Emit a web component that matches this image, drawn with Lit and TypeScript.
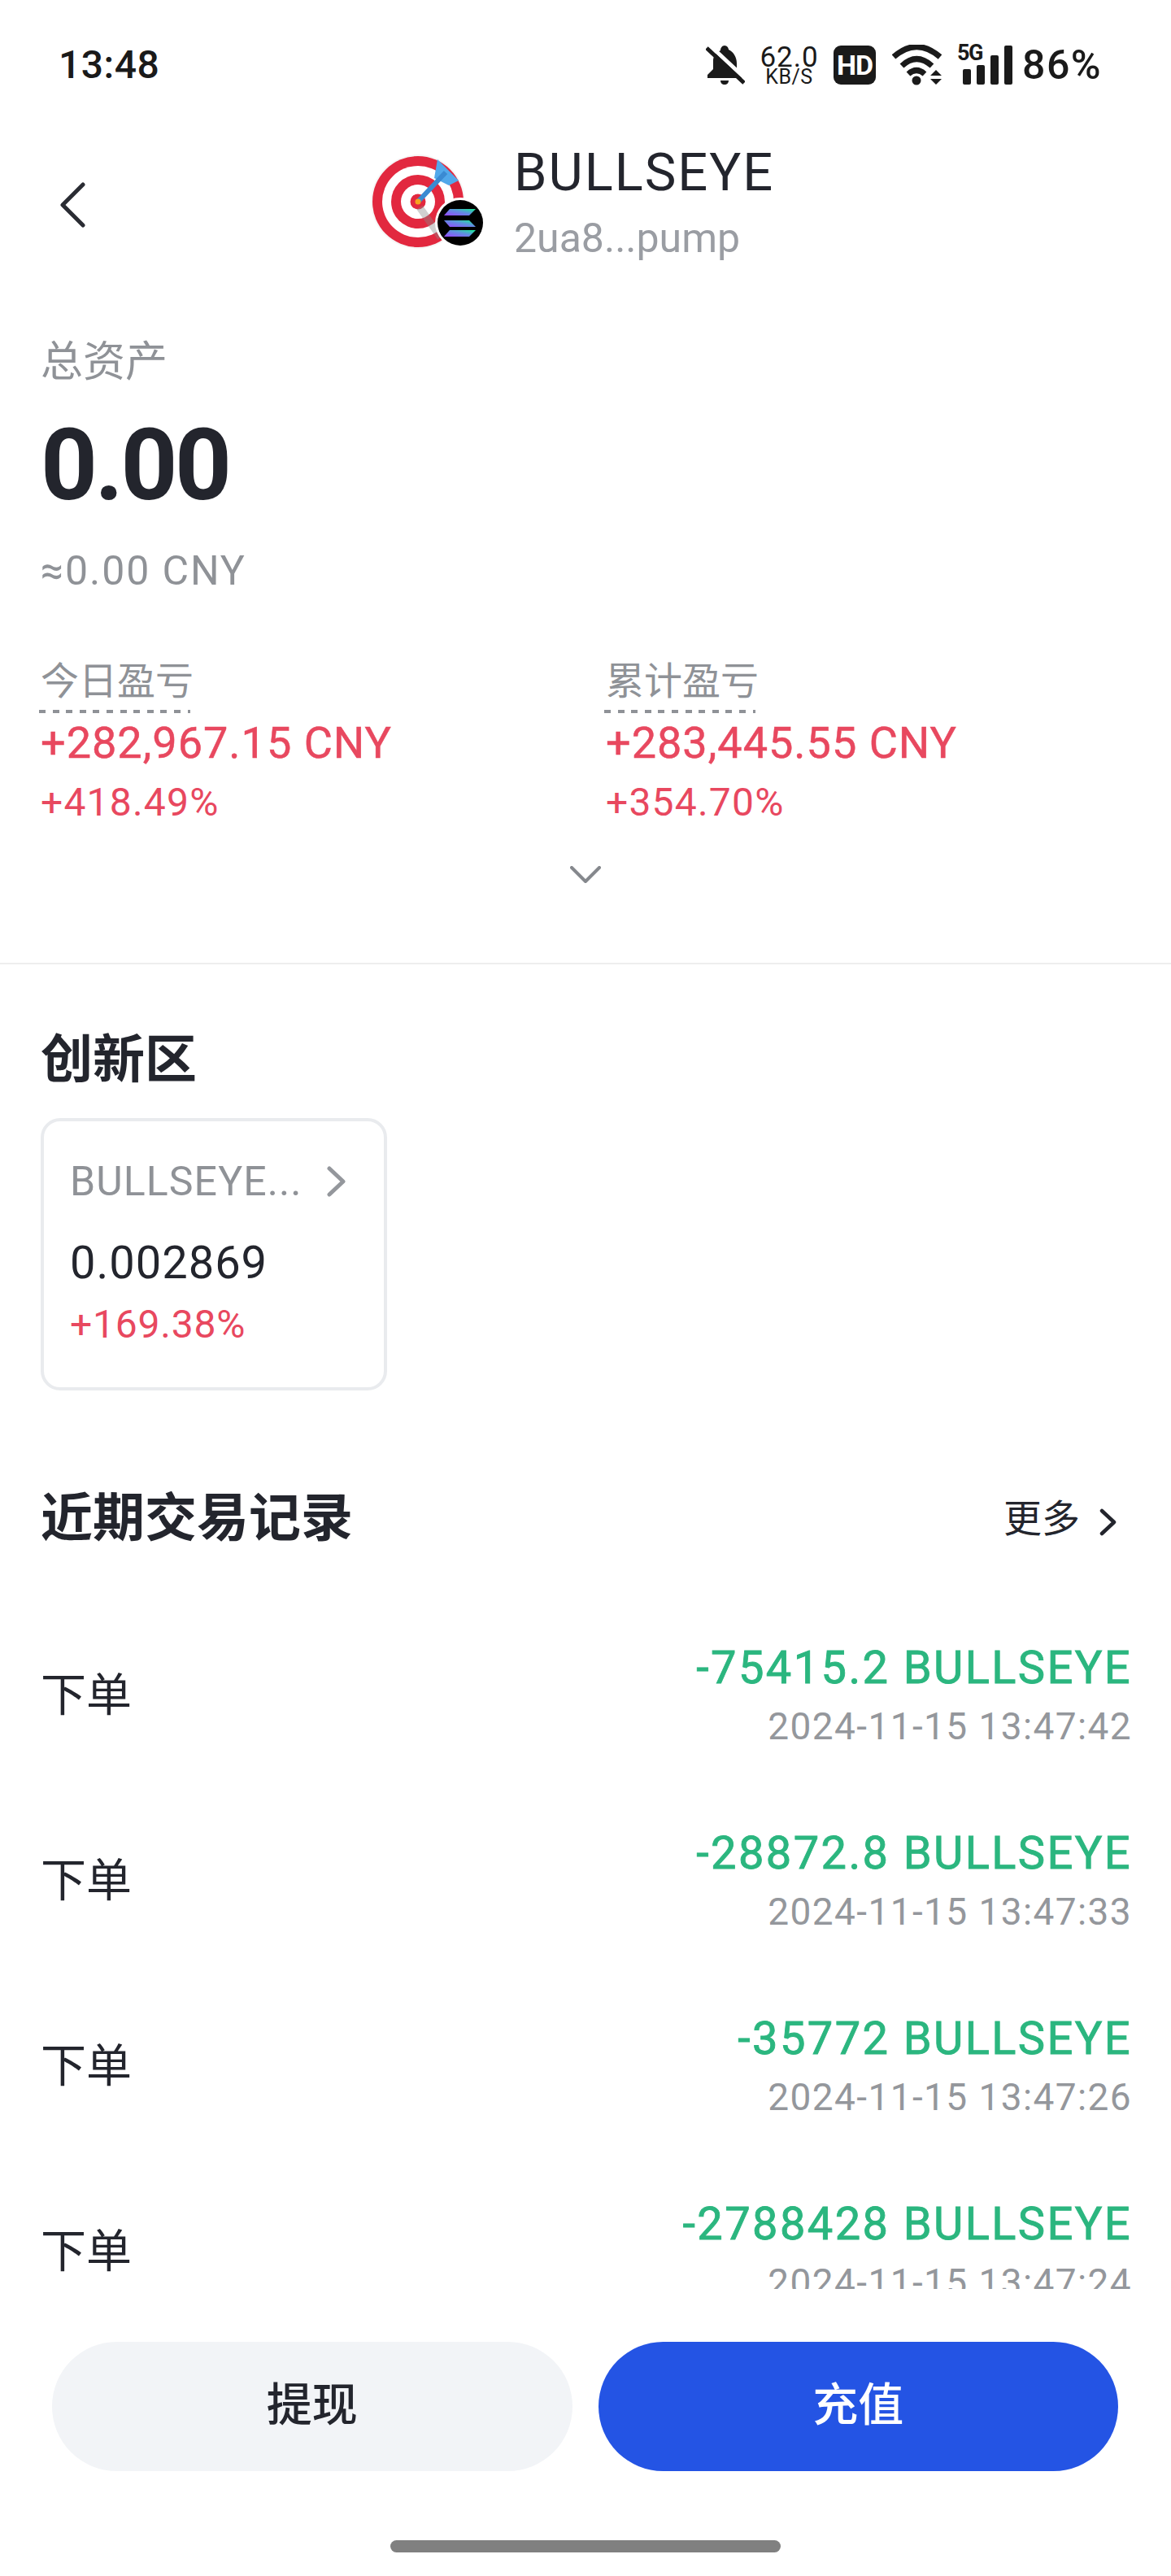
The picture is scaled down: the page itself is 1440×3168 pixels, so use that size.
import { LitElement, html, css, svg } from "lit";
import { customElement } from "lit/decorators.js";

const rows = [
  { amount: "-75415.2 BULLSEYE", time: "2024-11-15 13:47:42" },
  { amount: "-28872.8 BULLSEYE", time: "2024-11-15 13:47:33" },
  { amount: "-35772 BULLSEYE", time: "2024-11-15 13:47:26" },
  { amount: "-2788428 BULLSEYE", time: "2024-11-15 13:47:24" },
];

const chevron = (cls: string, d: string, w: number, h: number, vb: string) => html`
  <svg class=${cls} width=${w} height=${h} viewBox=${vb} fill="none" stroke="currentColor" stroke-linecap="round" stroke-linejoin="round">
    ${svg`<path d=${d}></path>`}
  </svg>`;

@customElement("app-root")
export class AppRoot extends LitElement {
  static styles = css`
    :host { display: block; width: 1440px; height: 3168px; background: #fff; overflow: hidden;
      font-family: "Roboto", "Noto Sans CJK SC", sans-serif; color: #23252d; }
    .page { display: flex; flex-direction: column; height: 3168px; }

    .status { height: 160px; flex: none; display: flex; align-items: center; padding: 0 0 0 72px; color: #1a1a1a; }
    .time { font-size: 48px; font-weight: 500; line-height: 60px; width: 796px; flex: none; letter-spacing: 0.5px; }
    .bell { flex: none; margin: 0 18px 0 0; }
    .speed { width: 73px; height: 48px; flex: none; display: flex; flex-direction: column; align-items: center; margin-right: 18px; }
    .speed b { font-weight: 400; font-size: 35px; line-height: 29px; height: 29px; letter-spacing: 1px; white-space: nowrap; }
    .speed i { font-style: normal; font-size: 25px; line-height: 19px; height: 19px; letter-spacing: 0.5px; }
    .hd { width: 52px; height: 48px; flex: none; border-radius: 9px; background: #1a1a1a; color: #fff; display: flex; align-items: center; justify-content: center;
      font-size: 34px; font-weight: 700; letter-spacing: -1px; margin-right: 20px; }
    .wifi { flex: none; margin-right: 18px; }
    .net { position: relative; width: 68px; height: 48px; flex: none; margin-right: 12px; }
    .fiveg { position: absolute; left: 0; top: -6px; font-size: 27px; line-height: 30px; font-weight: 700; letter-spacing: -1.5px; }
    .bars { position: absolute; left: 7px; top: 0; }
    .batt { font-size: 50px; font-weight: 500; line-height: 60px; letter-spacing: 1.5px; }

    .scroll { height: 2655px; flex: none; overflow: hidden; }
    .header { height: 176px; display: flex; padding-left: 72px; align-items: flex-start; }
    .back { color: #2a2c33; margin-top: 64px; stroke-width: 5; flex: none; }
    .logo { margin: 30px 0 0 350px; flex: none; }
    .names { margin: 14px 0 0 36px; }
    .title { font-size: 65px; line-height: 76px; color: #23252d; letter-spacing: 2px; }
    .sub { font-size: 50px; line-height: 86px; color: #9a9da3; }

    .summary { padding: 78px 50px 0; margin-top: 0; }
    .muted { color: #8f9297; }
    .lab { font-size: 52px; line-height: 60px; padding-top: 2px; }
    .total { font-size: 122px; line-height: 130px; font-weight: 700; margin-top: 32px; color: #23252d; letter-spacing: -3.5px; }
    .approx { font-size: 50px; line-height: 60px; margin-top: 34px; letter-spacing: 1.9px; }
    .stats { display: grid; grid-template-columns: 695px 1fr; margin-top: 76px; }
    .tip { display: inline-block; font-size: 47px; line-height: 60px; width: 188px; position: relative; height: 66px; }
    .tip::after { content: ""; position: absolute; left: -2px; top: 65px; width: 186px; height: 4px;
      background: repeating-linear-gradient(90deg, #8f9297 0 8px, transparent 8px 16.6px); }
    .up { color: #e8485f; }
    .gain { font-size: 54px; line-height: 66px; font-weight: 400; margin-top: 7px; letter-spacing: 1px; -webkit-text-stroke: 0.5px #e8485f; }
    .pct { font-size: 48px; line-height: 60px; margin-top: 10px; letter-spacing: 1.2px; }
    .expand { display: flex; justify-content: center; margin-top: 48px; color: #85888d; }
    .expand svg { stroke-width: 4; }
    .divider { height: 2px; background: #eeeeee; margin-top: 98px; }

    .section { padding: 0 50px; }
    .h2 { font-size: 64px; line-height: 80px; font-weight: 700; color: #23252d; }
    .inno { margin-top: 78px; }
    .card { box-sizing: border-box; width: 426px; height: 335px; margin-top: 31px; border: 4px solid #e9ebee; border-radius: 24px; padding: 44px 32px 0; }
    .cardtop { display: flex; align-items: center; justify-content: space-between; height: 60px; }
    .cname { font-size: 50px; line-height: 60px; white-space: nowrap; letter-spacing: 1.1px; }
    .cardtop svg { color: #94979c; stroke-width: 5; flex: none; margin-right: 15px; }
    .price { font-size: 56px; line-height: 70px; margin-top: 35px; color: #23252d; letter-spacing: 1px; }
    .cpct { font-size: 48px; line-height: 60px; margin-top: 11px; letter-spacing: 0.8px; }

    .recent { margin-top: 118px; }
    .rhead { display: flex; justify-content: space-between; align-items: center; }
    .more { display: flex; align-items: center; font-size: 47px; line-height: 60px; color: #23252d; gap: 24px; padding-right: 17px; }
    .more svg { stroke-width: 4.5; margin-top: 8px; }
    .rows { margin-top: 65px; }
    .row { height: 228px; display: flex; justify-content: space-between; align-items: center; }
    .type { font-size: 56px; line-height: 60px; color: #23252d; padding-bottom: 4px; }
    .right { text-align: right; margin-right: -2px; }
    .amt { font-size: 56px; line-height: 72px; font-weight: 400; color: #2bb67f; letter-spacing: 2.4px; -webkit-text-stroke: 0.9px #2bb67f; }
    .when { font-size: 46px; line-height: 72px; color: #94979c; letter-spacing: 1.4px; }

    .foot { flex: 1; display: flex; flex-direction: column; }
    .btns { display: flex; gap: 32px; padding: 65px 65px 0 64px; }
    .btn { box-sizing: border-box; flex: 1; height: 159px; border-radius: 80px; display: flex; align-items: center; justify-content: center; font-size: 56px; line-height: 60px; font-weight: 500; padding-bottom: 4px; }
    .grey { background: #f2f4f7; color: #23252d; }
    .blue { background: #2454e4; color: #fff; }
    .home { width: 480px; height: 15px; border-radius: 8px; background: #808080; margin: 85px auto 0; }
  `;

  render() {
    return html`<div class="page">
      <div class="status">
        <div class="time">13:48</div>
        <svg class="bell" width="48" height="48" viewBox="0 0 48 48" fill="#1a1a1a">
          <path d="M23 0C26 0 28 3 28 5C34 8 38 14 38 22L38 31L47 40L2 40L2 36L9 29L9 18C9 14 12 9 18 6C18 3 20 0 23 0Z"></path>
          <path d="M18 43H28C28 46 26 48 23 48C20 48 18 46 18 43Z"></path>
          <path d="M4 -1L50 42" stroke="#fff" stroke-width="5" fill="none"></path>
          <path d="M1 3L47 46" stroke="#1a1a1a" stroke-width="5" fill="none"></path>
        </svg>
        <div class="speed"><b>62.0</b><i>KB/S</i></div>
        <div class="hd">HD</div>
        <svg class="wifi" width="62" height="50" viewBox="0 0 62 50" fill="none" stroke="#1a1a1a">
          <path d="M2 15Q30 -10 59 15" stroke-width="7"></path>
          <path d="M12 26Q30 9 49 26" stroke-width="7"></path>
          <path d="M20 36Q30 27 40 36" stroke-width="7"></path>
          <circle cx="30" cy="44" r="5.5" fill="#1a1a1a" stroke="none"></circle>
          <path d="M47 38H61L54 31ZM47 42H61L54 49Z" fill="#1a1a1a" stroke="none"></path>
        </svg>
        <div class="net">
          <div class="fiveg">5G</div>
          <svg class="bars" width="61" height="48" viewBox="0 0 61 48" fill="#1a1a1a">
            <rect x="0" y="29" width="10" height="19" rx="2"></rect>
            <rect x="17" y="24" width="10" height="24" rx="2"></rect>
            <rect x="34" y="12" width="10" height="36" rx="2"></rect>
            <rect x="51" y="0" width="10" height="48" rx="2"></rect>
          </svg>
        </div>
        <div class="batt">86%</div>
      </div>

      <div class="scroll">
        <div class="header">
          ${chevron("back", "M30 3L5 28L30 53", 34, 56, "0 0 34 56")}
          <svg class="logo" width="140" height="116" viewBox="0 0 140 116">
            <defs>
              <linearGradient id="sol" x1="0" y1="1" x2="1" y2="0">
                <stop offset="0" stop-color="#9945ff"></stop>
                <stop offset="0.55" stop-color="#5f8fe0"></stop>
                <stop offset="1" stop-color="#14f195"></stop>
              </linearGradient>
              <clipPath id="disc"><circle cx="58" cy="58" r="56"></circle></clipPath>
            </defs>
            <circle cx="58" cy="58" r="58" fill="#f6f6f6"></circle>
            <circle cx="58" cy="58" r="56" fill="#e2283f"></circle>
            <circle cx="58" cy="58" r="44" fill="#fff"></circle>
            <circle cx="58" cy="58" r="33" fill="#e2283f"></circle>
            <circle cx="58" cy="58" r="21" fill="#fff"></circle>
            <circle cx="58" cy="58" r="9.5" fill="#e2283f"></circle>
            <path d="M60 65L86 102" stroke="#8a8a8a" stroke-opacity="0.4" stroke-width="9" clip-path="url(#disc)"></path>
            <path d="M82 6L108 32L96 38L78 29Z" fill="#52a8ea"></path>
            <path d="M58 58L92 22" stroke="#3a8ad2" stroke-width="6"></path>
            <circle cx="58" cy="58" r="3.5" fill="#f6a21e"></circle>
            <circle cx="110" cy="84" r="31" fill="#fff"></circle>
            <circle cx="110" cy="84" r="28" fill="#000"></circle>
            <path d="M97 67H129L121 75H90Z" fill="url(#sol)"></path>
            <path d="M90 81H121L129 89H97Z" fill="url(#sol)"></path>
            <path d="M97 93H129L121 101H90Z" fill="url(#sol)"></path>
          </svg>
          <div class="names">
            <div class="title">BULLSEYE</div>
            <div class="sub">2ua8...pump</div>
          </div>
        </div>

        <div class="summary">
          <div class="lab muted">总资产</div>
          <div class="total">0.00</div>
          <div class="approx muted">≈0.00 CNY</div>
          <div class="stats">
            <div>
              <div class="tip muted">今日盈亏</div>
              <div class="gain up">+282,967.15 CNY</div>
              <div class="pct up">+418.49%</div>
            </div>
            <div>
              <div class="tip muted">累计盈亏</div>
              <div class="gain up">+283,445.55 CNY</div>
              <div class="pct up">+354.70%</div>
            </div>
          </div>
          <div class="expand">${chevron("", "M2 2L19 19L36 2", 38, 21, "0 0 38 21")}</div>
        </div>
        <div class="divider"></div>

        <div class="section inno">
          <div class="h2">创新区</div>
          <div class="card">
            <div class="cardtop">
              <div class="cname muted">BULLSEYE...</div>
              ${chevron("", "M3 3L20 19L3 35", 23, 38, "0 0 23 38")}
            </div>
            <div class="price">0.002869</div>
            <div class="cpct up">+169.38%</div>
          </div>
        </div>

        <div class="section recent">
          <div class="rhead">
            <div class="h2">近期交易记录</div>
            <div class="more">更多${chevron("", "M3 3L18 17L3 31", 21, 34, "0 0 21 34")}</div>
          </div>
          <div class="rows">
            ${rows.map((r) => html`<div class="row">
              <div class="type">下单</div>
              <div class="right">
                <div class="amt">${r.amount}</div>
                <div class="when">${r.time}</div>
              </div>
            </div>`)}
          </div>
        </div>
      </div>

      <div class="foot">
        <div class="btns">
          <div class="btn grey">提现</div>
          <div class="btn blue">充值</div>
        </div>
        <div class="home"></div>
      </div>
    </div>`;
  }
}
